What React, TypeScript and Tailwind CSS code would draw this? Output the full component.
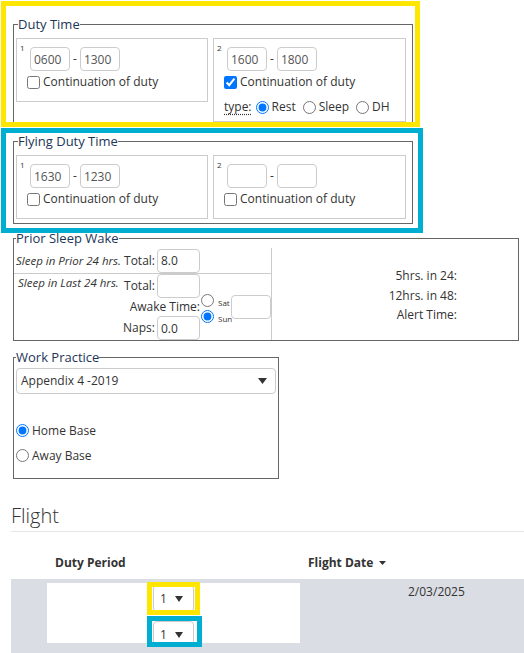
import React from "react";

const TimeInput = ({ value = "" }: { value?: string }) => (
    <input
        readOnly
        value={value}
        className="h-[24px] w-[40px] rounded-[4px] border border-[#ccc] bg-white px-[3px] text-[12px] text-[#555] outline-none"
    />
);

const Legend = ({ children }: { children: React.ReactNode }) => (
    <legend className="ml-[2px] text-[13px] leading-[16px] text-[#1d3557]">{children}</legend>
);

interface TimeBoxProps {
    num: string;
    from?: string;
    to?: string;
    checked?: boolean;
    withType?: boolean;
    width: string;
    height: string;
}

const TimeBox: React.FC<TimeBoxProps> = ({ num, from, to, checked, withType, width, height }) => (
    <div className={`flex border border-[#ccc] ${width} ${height}`}>
        <span className="w-[13px] pl-[3px] pt-[5px] text-[8px] leading-none">{num}</span>
        <div className="flex flex-col pt-[8px]">
            <div className="flex items-center">
                <TimeInput value={from} />
                <span className="mx-[3px]">-</span>
                <TimeInput value={to} />
            </div>
            <label className="-ml-[3px] mt-[3px] flex items-center leading-[16px]">
                <input type="checkbox" defaultChecked={checked} className="h-[13px] w-[13px]" />
                <span className="ml-[3px]">Continuation of duty</span>
            </label>
            {withType && (
                <div className="-ml-[3px] mt-[9px] flex items-center leading-[16px]">
                    <span className="underline decoration-dotted underline-offset-[3px]">type:</span>
                    <input type="radio" name="type" defaultChecked className="ml-[4px] h-[13px] w-[13px]" />
                    <span className="ml-[3px]">Rest</span>
                    <input type="radio" name="type" className="ml-[7px] h-[13px] w-[13px]" />
                    <span className="ml-[3px]">Sleep</span>
                    <input type="radio" name="type" className="ml-[7px] h-[13px] w-[13px]" />
                    <span className="ml-[3px]">DH</span>
                </div>
            )}
        </div>
    </div>
);

const SmallInput = ({ value = "", w = "w-[43px]" }: { value?: string; w?: string }) => (
    <input
        readOnly
        value={value}
        className={`h-[24px] ${w} rounded-[4px] border border-[#ccc] bg-white px-[3px] text-[12px] text-[#333] outline-none`}
    />
);

const Caret = ({ w = 9, h = 6 }: { w?: number; h?: number }) => (
    <svg width={w} height={h} viewBox={`0 0 ${w} ${h}`}>
        <polygon points={`0,0 ${w},0 ${w / 2},${h}`} fill="#333" />
    </svg>
);

const App: React.FC = () => {
    return (
        <div className="relative h-[653px] w-[524px] overflow-hidden bg-white pt-[16px] font-['Open_Sans',sans-serif] text-[12px] text-[#333]">
            {/* Duty Time */}
            <fieldset className="ml-[13px] w-[400px] border border-[#666] px-[2px]">
                <Legend>Duty Time</Legend>
                <div className="mt-[6px] flex items-start gap-[5px]">
                    <TimeBox num="1" from="0600" to="1300" width="w-[192px]" height="h-[64px]" />
                    <TimeBox num="2" from="1600" to="1800" checked withType width="w-[193px]" height="h-[84px]" />
                </div>
            </fieldset>

            {/* Flying Duty Time */}
            <fieldset className="ml-[13px] mt-[10px] w-[400px] border border-[#666] px-[2px] pb-[4px]">
                <Legend>Flying Duty Time</Legend>
                <div className="mt-[6px] flex items-start gap-[5px]">
                    <TimeBox num="1" from="1630" to="1230" width="w-[192px]" height="h-[64px]" />
                    <TimeBox num="2" width="w-[193px]" height="h-[64px]" />
                </div>
            </fieldset>

            {/* Prior Sleep Wake */}
            <fieldset className="ml-[13px] mt-[6px] w-[506px] border border-[#666]">
                <Legend>Prior Sleep Wake</Legend>
                <div className="mt-[2px] flex h-[92px]">
                    <div className="w-[258px] shrink-0 border-r border-[#ccc]">
                        <div className="flex h-[26px] items-center border-b border-[#ccc] pr-[71px]">
                            <span className="whitespace-nowrap pl-[2px] text-[11.5px] italic">Sleep in Prior 24 hrs.</span>
                            <span className="ml-auto">Total:</span>
                            <span className="ml-[2px]">
                                <SmallInput value="8.0" />
                            </span>
                        </div>
                        <div className="flex h-[66px]">
                            <span className="whitespace-nowrap pl-[4px] pt-[1px] text-[11.5px] leading-[16px] italic">Sleep in Last 24 hrs.</span>
                            <div className="ml-auto flex flex-col items-end">
                                <div className="flex h-[24px] items-center">
                                    <span>Total:</span>
                                    <span className="ml-[2px]">
                                        <SmallInput />
                                    </span>
                                </div>
                                <div className="h-[18px] whitespace-nowrap leading-[18px]">Awake Time:</div>
                                <div className="flex h-[24px] items-center">
                                    <span>Naps:</span>
                                    <span className="ml-[2px]">
                                        <SmallInput value="0.0" />
                                    </span>
                                </div>
                            </div>
                            <div className="ml-[1px] flex w-[30px] shrink-0 flex-col gap-[3px] pt-[20px]">
                                <label className="flex items-end">
                                    <input type="radio" name="day" className="h-[13px] w-[13px]" />
                                    <span className="ml-[4px] text-[8px] leading-none">Sat</span>
                                </label>
                                <label className="flex items-end">
                                    <input type="radio" name="day" defaultChecked className="h-[13px] w-[13px]" />
                                    <span className="ml-[4px] text-[8px] leading-none">Sun</span>
                                </label>
                            </div>
                            <div className="mt-[21px] shrink-0">
                                <SmallInput w="w-[40px]" />
                            </div>
                        </div>
                    </div>
                    <div className="flex flex-1 flex-col items-end justify-center pr-[61px] pt-[3px] leading-[19.5px]">
                        <span>5hrs. in 24:</span>
                        <span>12hrs. in 48:</span>
                        <span>Alert Time:</span>
                    </div>
                </div>
            </fieldset>

            {/* Work Practice */}
            <fieldset className="ml-[13px] mt-[8px] w-[266px] border border-[#666] pb-[10px]">
                <Legend>Work Practice</Legend>
                <div className="mx-[2px] mt-[3px] flex h-[26px] items-center justify-between rounded-[4px] border border-[#ccc] pl-[4px] pr-[8px]">
                    <span>Appendix 4 -2019</span>
                    <Caret />
                </div>
                <label className="ml-[2px] mt-[24px] flex h-[25px] items-center">
                    <input type="radio" name="base" defaultChecked className="h-[13px] w-[13px]" />
                    <span className="ml-[3px]">Home Base</span>
                </label>
                <label className="ml-[2px] flex h-[25px] items-center">
                    <input type="radio" name="base" className="h-[13px] w-[13px]" />
                    <span className="ml-[3px]">Away Base</span>
                </label>
            </fieldset>

            {/* Flight */}
            <div className="ml-[11px] mt-[23px]">
                <h2 className="border-b border-[#e5e5e5] pb-[1px] text-[20px] font-light leading-[28px] text-[#333]">Flight</h2>
                <div className="flex pb-[8px] pt-[23px] font-bold leading-[16px]">
                    <span className="ml-[44px] w-[253px]">Duty Period</span>
                    <span className="flex items-center">
                        Flight Date
                        <span className="ml-[6px]">
                            <Caret w={7} h={4} />
                        </span>
                    </span>
                </div>
                <div className="flex h-[80px] bg-[#dadde3] pt-[4px]">
                    <div className="ml-[36px] flex h-[60px] w-[253px] flex-col items-center gap-[9px] overflow-hidden bg-white pt-[2px]">
                        {[0, 1].map((i) => (
                            <div key={i} className="flex h-[27px] w-[41px] shrink-0 items-center rounded-[4px] border border-[#ccc] pl-[6px]">
                                <span>1</span>
                                <span className="ml-[8px]">
                                    <Caret w={8} h={6} />
                                </span>
                            </div>
                        ))}
                    </div>
                    <span className="ml-[108px] pt-[1px] leading-[16px]">2/03/2025</span>
                </div>
            </div>

            {/* highlight annotations */}
            <div className="absolute left-[1px] top-[1px] h-[126px] w-[419px] border-[5px] border-[#ffe600]" />
            <div className="absolute left-[1px] top-[128px] h-[105px] w-[422px] border-[5px] border-[#00aed1]" />
            <div className="absolute left-[147px] top-[582px] h-[33px] w-[53px] border-[5px] border-[#ffe600]" />
            <div className="absolute left-[147px] top-[616px] h-[31px] w-[55px] border-[5px] border-[#00aed1]" />
        </div>
    );
};

export default App;
